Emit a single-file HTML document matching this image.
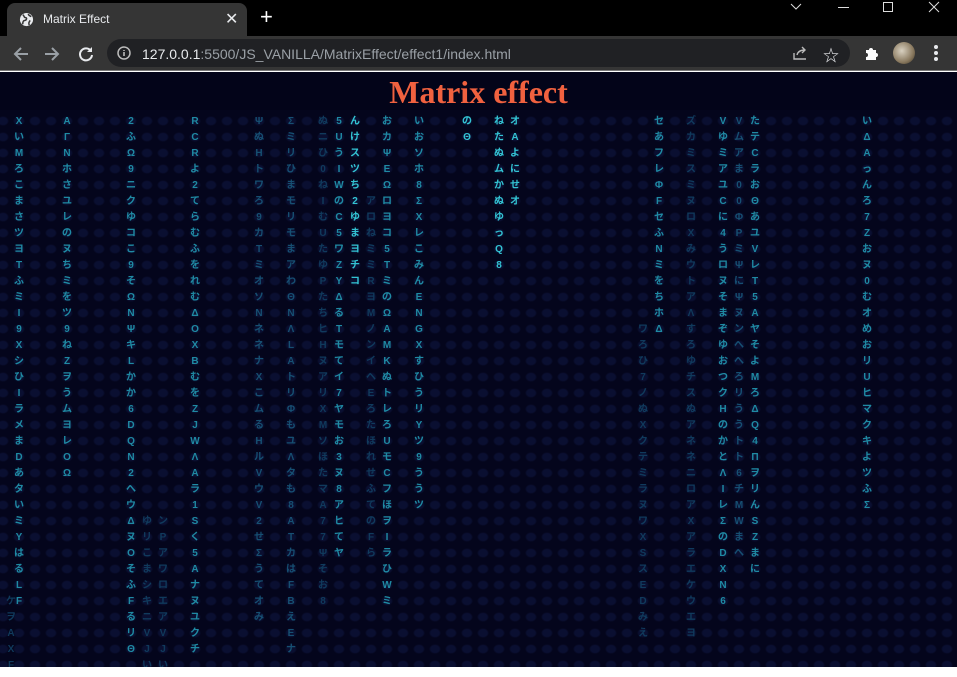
<!DOCTYPE html>
<html><head><meta charset="utf-8"><style>
*{margin:0;padding:0;box-sizing:border-box}
html,body{width:957px;height:677px;overflow:hidden}
body{background:#fff;font-family:"Liberation Sans","Noto Sans CJK JP",sans-serif;position:relative}
#tabbar{position:absolute;left:0;top:0;width:957px;height:36px;background:#000}
#tab{position:absolute;left:7px;top:3px;width:240px;height:33px;background:#353535;border-radius:8px 8px 0 0}
#tab .t{position:absolute;left:36px;top:9px;color:#e8eaed;font-size:12px}
#tab .x{position:absolute;left:218px;top:6px;color:#e8eaed;font-size:16px}
#plus{position:absolute;left:260px;top:4px;color:#fff;font-size:22px}
#toolbar{position:absolute;left:0;top:36px;width:957px;height:35px;background:#353535;border-bottom:1px solid #7a7a7a}
#url{position:absolute;left:107px;top:3px;width:743px;height:28px;background:#202124;border-radius:14px}
#url .u{position:absolute;left:35px;top:7px;font-size:14px;color:#9aa0a6}
#url .u b{color:#e8eaed;font-weight:normal}
#page{position:absolute;left:0;top:72px;width:957px;height:595px;background:#030419;overflow:hidden}
#grid{position:absolute;left:0;top:38px;width:957px;height:560px;background-color:#04051c;background-image:radial-gradient(ellipse 6px 5px at 8px 8px,#0a0f31 70%,rgba(0,0,0,0) 100%);background-size:16px 16px;background-position:-5px 3px}
h1{position:absolute;left:0;width:957px;top:2px;text-align:center;font-family:"Liberation Serif",serif;font-weight:bold;font-size:32px;color:#f0613f}
.c{position:absolute;width:16px;text-align:center;font-size:10px;font-weight:bold;line-height:16px;top:42px}
.b{color:#33c4d3}.m{color:#1f8aa3}.d{color:#164f72}.e{color:#103a5c}
</style></head><body>
<div id="tabbar"><div id="tab">
<svg style="position:absolute;left:12px;top:9px" width="15" height="15" viewBox="0 0 16 16"><circle cx="8" cy="8" r="7" fill="#e8eaed"/><path d="M4 3c2 1 1 3 3 3s1 3 -1 3-2 3-2 4M10 2c0 2 2 2 3 3M12 9c-1 1-2 3-1 5" stroke="#353535" stroke-width="1.6" fill="none"/></svg>
<span class="t">Matrix Effect</span><span class="x">✕</span></div>
<span id="plus">+</span>
<svg style="position:absolute;left:790px;top:3px" width="12" height="8"><path d="M1 1l5 5 5-5" stroke="#ddd" fill="none"/></svg>
<div style="position:absolute;left:838px;top:7px;width:11px;height:1px;background:#ddd"></div>
<div style="position:absolute;left:883px;top:2px;width:10px;height:10px;border:1px solid #ddd"></div>
<svg style="position:absolute;left:928px;top:1px" width="12" height="12"><path d="M1 1l10 10M11 1l-10 10" stroke="#ddd"/></svg>
</div>
<div id="toolbar">
<svg style="position:absolute;left:12px;top:9px" width="18" height="18"><path d="M16 9H3M9 3L3 9l6 6" stroke="#9aa0a6" stroke-width="2" fill="none"/></svg>
<svg style="position:absolute;left:43px;top:9px" width="18" height="18"><path d="M2 9h13M9 3l6 6-6 6" stroke="#9aa0a6" stroke-width="2" fill="none"/></svg>
<svg style="position:absolute;left:77px;top:9px" width="18" height="18"><path d="M14 6A6 6 0 1 0 15 10" stroke="#e8eaed" stroke-width="2" fill="none"/><path d="M15 2v5h-5z" fill="#e8eaed"/></svg>
<div id="url">
<svg style="position:absolute;left:10px;top:7px" width="14" height="14"><circle cx="7" cy="7" r="6" stroke="#bbb" stroke-width="1.5" fill="none"/><path d="M7 6v4M7 4v1" stroke="#bbb" stroke-width="1.6"/></svg>
<span class="u"><b>127.0.0.1</b>:5500/JS_VANILLA/MatrixEffect/effect1/index.html</span>
<svg style="position:absolute;left:685px;top:6px" width="16" height="16"><path d="M2 8v6h12M5 10c1-4 4-5 8-5M10 2l3 3-3 3" stroke="#bbb" stroke-width="1.4" fill="none"/></svg>
<span style="position:absolute;left:716px;top:3px;color:#e8eaed;font-size:16px">☆</span>
</div>
<svg style="position:absolute;left:863px;top:9px" width="16" height="16"><path d="M3 5h3a2 2 0 0 1 4 0h3v3a2 2 0 0 1 0 4v3H3v-3a2 2 0 0 0 0-4z" fill="#fff"/></svg>
<div style="position:absolute;left:893px;top:6px;width:22px;height:22px;border-radius:50%;background:radial-gradient(circle at 40% 40%,#d8d0c0,#8a7a60 60%,#3a3020)"></div>
<div style="position:absolute;left:934px;top:9px;width:4px;font-size:0"><div style="width:4px;height:4px;border-radius:2px;background:#e8eaed;margin-bottom:2px"></div><div style="width:4px;height:4px;border-radius:2px;background:#e8eaed;margin-bottom:2px"></div><div style="width:4px;height:4px;border-radius:2px;background:#e8eaed"></div></div>
</div>
<div id="page">
<div id="grid"></div>
<h1>Matrix effect</h1>
<div class="c m" style="left:11px">X<br>い<br>M<br>ろ<br>こ<br>ま<br>さ<br>ツ<br>ヨ<br>T<br>ふ<br>ミ<br>I<br>9<br>X<br>シ<br>ひ<br>I<br>ラ<br>メ<br>ま<br>D<br>あ<br>タ<br>い<br>ミ<br>Y<br>は<br>る<br>L<br>F</div>
<div class="c m" style="left:59px">A<br>Γ<br>N<br>ホ<br>さ<br>ユ<br>レ<br>の<br>ヌ<br>ち<br>ミ<br>を<br>ツ<br>9<br>ね<br>Z<br>ヲ<br>う<br>ム<br>ヨ<br>レ<br>O<br>Ω</div>
<div class="c m" style="left:123px">2<br>ふ<br>Ω<br>9<br>ニ<br>ク<br>ゆ<br>コ<br>こ<br>9<br>そ<br>Ω<br>N<br>Ψ<br>キ<br>L<br>か<br>か<br>6<br>D<br>Q<br>N<br>2<br>へ<br>ウ<br>Δ<br>ヌ<br>O<br>そ<br>ふ<br>F<br>る<br>リ<br>Θ</div>
<div class="c m" style="left:187px">R<br>C<br>R<br>よ<br>2<br>て<br>ら<br>む<br>ふ<br>を<br>れ<br>む<br>Δ<br>O<br>X<br>B<br>む<br>を<br>Z<br>J<br>W<br>Λ<br>A<br>ラ<br>1<br>S<br>く<br>5<br>A<br>ナ<br>ヌ<br>ユ<br>ク<br>チ</div>
<div class="c d" style="left:251px">Ψ<br>ぬ<br>H<br>ト<br>ワ<br>ろ<br>9<br>カ<br>T<br>ミ<br>オ<br>ソ<br>N<br>ネ<br>ネ<br>ナ<br>X<br>こ<br>ム<br>る<br>H<br>ル<br>V<br>ウ<br>V<br>2<br>せ<br>Σ<br>う<br>て<br>オ<br>み</div>
<div class="c d" style="left:283px">Σ<br>ミ<br>リ<br>ひ<br>ま<br>モ<br>リ<br>モ<br>ま<br>ア<br>わ<br>Θ<br>N<br>Λ<br>L<br>A<br>ト<br>リ<br>Φ<br>も<br>ユ<br>Λ<br>タ<br>も<br>8<br>A<br>T<br>カ<br>は<br>F<br>B<br>え<br>E<br>ナ</div>
<div class="c e" style="left:315px">ぬ<br>ニ<br>ひ<br>0<br>ね<br>I<br>む<br>U<br>た<br>ゆ<br>P<br>た<br>ち<br>ヒ<br>H<br>ヌ<br>ア<br>リ<br>X<br>M<br>ソ<br>ほ<br>た<br>マ<br>A<br>7<br>7<br>Ψ<br>そ<br>お<br>8</div>
<div class="c m" style="left:331px">5<br>U<br>う<br>I<br>W<br>の<br>C<br>5<br>ワ<br>Z<br>Y<br>Δ<br>る<br>T<br>モ<br>て<br>イ<br>7<br>ヤ<br>モ<br>お<br>3<br>ヌ<br>8<br>ア<br>ヒ<br>て<br>ヤ</div>
<div class="c b" style="left:347px">ん<br>け<br>ス<br>ツ<br>ち<br>2<br>ゆ<br>ま<br>ヨ<br>チ<br>コ</div>
<div class="c m" style="left:379px">お<br>カ<br>Ψ<br>E<br>Ω<br>ロ<br>ヨ<br>コ<br>5<br>T<br>ミ<br>の<br>Ω<br>A<br>M<br>K<br>ぬ<br>ト<br>レ<br>ろ<br>U<br>モ<br>C<br>フ<br>ほ<br>ヲ<br>I<br>ラ<br>ひ<br>W<br>ミ</div>
<div class="c e" style="left:363px;top:122px">ア<br>ロ<br>ね<br>ミ<br>ミ<br>R<br>ヨ<br>M<br>ノ<br>ン<br>イ<br>ヘ<br>E<br>ろ<br>た<br>ほ<br>れ<br>せ<br>ふ<br>て<br>の<br>F<br>ら</div>
<div class="c m" style="left:411px">い<br>お<br>ソ<br>ホ<br>8<br>Σ<br>X<br>レ<br>こ<br>み<br>ん<br>E<br>N<br>G<br>X<br>す<br>ひ<br>う<br>リ<br>Y<br>ツ<br>9<br>う<br>う<br>ツ</div>
<div class="c b" style="left:459px">の<br>Θ</div>
<div class="c b" style="left:491px">ね<br>た<br>ぬ<br>ム<br>か<br>ぬ<br>ゆ<br>っ<br>Q<br>8</div>
<div class="c b" style="left:507px">オ<br>A<br>よ<br>に<br>せ<br>オ</div>
<div class="c e" style="left:635px;top:250px">ワ<br>ろ<br>ひ<br>7<br>ノ<br>ぬ<br>X<br>ク<br>テ<br>ミ<br>ラ<br>ヌ<br>ワ<br>X<br>S<br>ス<br>E<br>D<br>み<br>え</div>
<div class="c m" style="left:651px">セ<br>あ<br>フ<br>レ<br>Φ<br>F<br>セ<br>ふ<br>N<br>ミ<br>を<br>ち<br>ホ<br>Δ</div>
<div class="c e" style="left:683px">ズ<br>カ<br>ミ<br>ス<br>ミ<br>ヌ<br>ロ<br>X<br>み<br>ウ<br>ト<br>ア<br>Λ<br>す<br>ろ<br>ゆ<br>チ<br>ス<br>ぬ<br>ア<br>ネ<br>ネ<br>ニ<br>ロ<br>ア<br>X<br>ア<br>ラ<br>エ<br>ケ<br>ウ<br>エ<br>ヨ</div>
<div class="c m" style="left:715px">V<br>ゆ<br>ミ<br>ア<br>ユ<br>C<br>に<br>4<br>う<br>ロ<br>ヌ<br>そ<br>ま<br>ぞ<br>ゆ<br>お<br>つ<br>ク<br>H<br>の<br>か<br>と<br>Λ<br>I<br>レ<br>Σ<br>の<br>D<br>X<br>N<br>6</div>
<div class="c d" style="left:731px">V<br>ム<br>ア<br>ま<br>0<br>0<br>Φ<br>P<br>ミ<br>Ψ<br>に<br>Ψ<br>ヌ<br>ン<br>へ<br>へ<br>ろ<br>リ<br>う<br>う<br>ト<br>ト<br>6<br>チ<br>M<br>W<br>ま<br>へ</div>
<div class="c m" style="left:747px">た<br>テ<br>C<br>ラ<br>お<br>Θ<br>あ<br>ユ<br>V<br>レ<br>T<br>5<br>A<br>ヤ<br>そ<br>よ<br>M<br>ろ<br>Δ<br>Q<br>4<br>Π<br>ヲ<br>リ<br>ん<br>S<br>Z<br>ま<br>に</div>
<div class="c m" style="left:859px">い<br>Δ<br>A<br>っ<br>ん<br>ろ<br>7<br>Z<br>お<br>ヌ<br>0<br>む<br>オ<br>め<br>お<br>リ<br>U<br>ヒ<br>マ<br>ク<br>キ<br>よ<br>ツ<br>ふ<br>Σ</div>
<div class="c e" style="left:139px;top:442px">ゆ<br>リ<br>こ<br>ま<br>シ<br>キ<br>ニ<br>V<br>J<br>い</div>
<div class="c e" style="left:155px;top:442px">ン<br>P<br>ア<br>ワ<br>ロ<br>エ<br>ア<br>V<br>J<br>い</div>
<div class="c e" style="left:3px;top:522px">ケ<br>ヲ<br>A<br>X<br>F</div>
</div>
</body></html>
